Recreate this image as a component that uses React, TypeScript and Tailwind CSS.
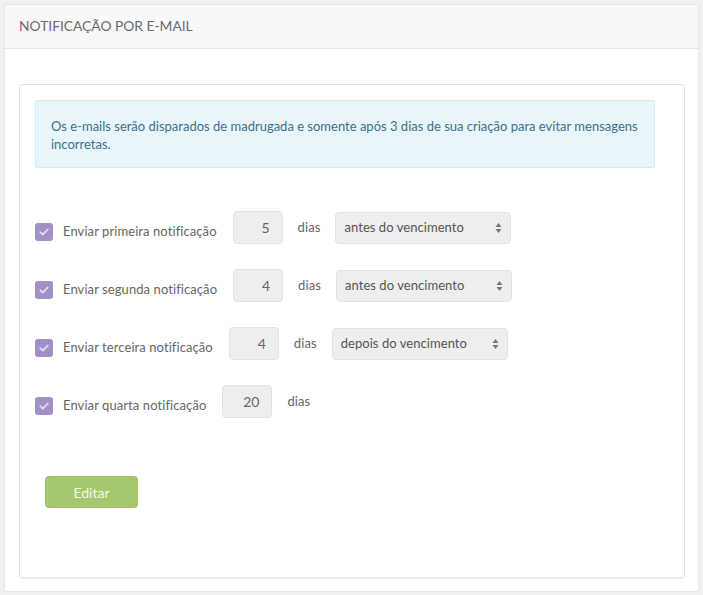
import React from "react";

const font = { fontFamily: "Lato, 'Open Sans', sans-serif" };

function Check() {
  return (
    <div className="w-[18px] h-[18px] rounded-[3px] bg-[#a28fc8] flex items-center justify-center shrink-0">
      <svg width="10" height="8" viewBox="0 0 10 8">
        <path d="M1.2 4.2 L3.8 6.6 L8.8 1.4" stroke="#e4dcf3" strokeWidth="1.6" fill="none" strokeLinecap="round" strokeLinejoin="round" />
      </svg>
    </div>
  );
}

function Select({ value }: { value: string }) {
  return (
    <div className="ml-[15px] w-[176px] h-[32px] rounded-[4px] bg-[#eeeeee] border border-[#e2e2e2] flex items-center justify-between pl-[8px] pr-[8px] text-[13px] text-[#555] tracking-[0.05px]">
      <span>{value}</span>
      <svg width="7" height="12" viewBox="0 0 7 12">
        <path d="M3.5 1 L6.5 5 L0.5 5 Z" fill="#777" />
        <path d="M3.5 11 L6.5 7 L0.5 7 Z" fill="#777" />
      </svg>
    </div>
  );
}

function Row({ label, num, sel }: { label: string; num: string; sel?: string }) {
  return (
    <div className="flex items-center h-[33px]">
      <div className="flex items-center mt-[8px]">
        <Check />
        <span className="ml-[10px] text-[13px] text-[#666] tracking-[0.08px]">{label}</span>
      </div>
      <div className="ml-[16px] w-[50px] h-[33px] rounded-[4px] bg-[#eeeeee] border border-[#e2e2e2] flex items-center justify-end pr-[12px] text-[14px] text-[#666]">
        {num}
      </div>
      <span className="ml-[15px] text-[13px] text-[#666] tracking-[0.1px]">dias</span>
      {sel && <Select value={sel} />}
    </div>
  );
}

export default function App() {
  return (
    <div className="min-h-[595px] bg-[#eef0f2] pt-[4px] px-[4px] pb-[3px]" style={font}>
      <div className="bg-white border border-[#e6e6e6] rounded-[2px]">
        <div className="h-[44px] bg-[#f8f8f8] border-b border-[#e6e6e6] flex items-center pl-[14px] text-[13.8px] text-[#6a6a6a]">
          NOTIFICAÇÃO POR E-MAIL
        </div>
        <div className="pt-[35px] pl-[14px] pr-[13px] pb-[13px]">
          <div className="h-[494px] border border-[#e4e4e4] rounded-[3px] shadow-[0_1px_2px_rgba(0,0,0,0.06)] pt-[15px] pl-[15px]">
            <div className="w-[620px] h-[68px] bg-[#e8f6fb] border border-[#c8eef6] rounded-[2px] pt-[16px] pl-[15px] pr-[15px] text-[13px] leading-[18px] text-[#3f6f87]">
              Os e-mails serão disparados de madrugada e somente após 3 dias de sua criação para evitar mensagens incorretas.
            </div>
            <div className="mt-[43px] flex flex-col gap-[25px]">
              <Row label="Enviar primeira notificação" num="5" sel="antes do vencimento" />
              <Row label="Enviar segunda notificação" num="4" sel="antes do vencimento" />
              <Row label="Enviar terceira notificação" num="4" sel="depois do vencimento" />
              <Row label="Enviar quarta notificação" num="20" />
            </div>
            <button className="mt-[58px] ml-[10px] w-[93px] h-[32px] rounded-[4px] bg-[#a6c86f] border border-[#9cc066] text-[14px] text-[#f3f8ea]">
              Editar
            </button>
          </div>
        </div>
      </div>
    </div>
  );
}
